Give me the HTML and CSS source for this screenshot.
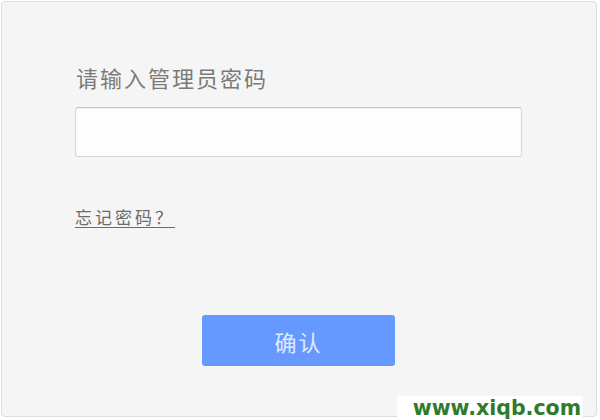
FILE: index.html
```html
<!DOCTYPE html>
<html lang="zh-CN">
<head>
<meta charset="utf-8">
<title>登录</title>
<link rel="stylesheet" href="styles.css">
</head>
<body>
<div class="page">
  <div class="panel">
    <div class="label">请输入管理员密码</div>
    <div class="field"><input class="input" type="password"></div>
    <a class="forgot" href="#">忘记密码？</a>
    <div class="actions"><button class="confirm" type="button">确认</button></div>
  </div>
  <div class="watermark">www.xiqb.com</div>
</div>
</body>
</html>
```
FILE: styles.css
```css
html, body {
  margin: 0;
  padding: 0;
  background: #ffffff;
}
.page {
  width: 600px;
  height: 420px;
  position: relative;
  padding: 1px 3px 3px 1px;
  box-sizing: border-box;
  font-family: "Noto Sans CJK SC", "Noto Sans", sans-serif;
}
.panel {
  height: 100%;
  box-sizing: border-box;
  background: #f5f5f5;
  border: 1px solid #dedede;
  border-radius: 4px;
  padding: 59px 0 0 73px;
  display: flex;
  flex-direction: column;
  align-items: flex-start;
}
.label {
  font-size: 22px;
  line-height: 32px;
  letter-spacing: 2px;
  padding-left: 1px;
  color: #7a7a7a;
}
.field {
  margin-top: 14px;
}
.input {
  display: block;
  width: 447px;
  height: 50px;
  box-sizing: border-box;
  border: 1px solid #d6d6d6;
  border-top-color: #c8c8c8;
  border-radius: 3px;
  background: #fdfdfd;
  box-shadow: inset 0 1px 1px rgba(0,0,0,0.06);
  margin: 0;
  padding: 0 10px;
}
.forgot {
  margin-top: 47px;
  font-size: 17px;
  line-height: 26px;
  letter-spacing: 3px;
  color: #6b6b6b;
  text-decoration: underline;
  text-underline-offset: 3px;
}
.actions {
  margin-top: 85px;
  padding-left: 127px;
}
.confirm {
  display: block;
  width: 193px;
  height: 51px;
  border: 0;
  border-radius: 3px;
  background: #6699ff;
  color: #e0eaff;
  font-family: "Noto Sans CJK SC", "Noto Sans", sans-serif;
  font-size: 22px;
  letter-spacing: 2px;
  padding: 0;
}
.watermark {
  position: absolute;
  left: 397px;
  top: 396px;
  width: 186px;
  height: 24px;
  background: #ffffff;
  color: #2f7a2c;
  font-family: "DejaVu Sans", sans-serif;
  font-weight: bold;
  font-size: 20.5px;
  line-height: 24px;
  text-align: right;
  padding-right: 2px;
  box-sizing: border-box;
  white-space: nowrap;
}
```
